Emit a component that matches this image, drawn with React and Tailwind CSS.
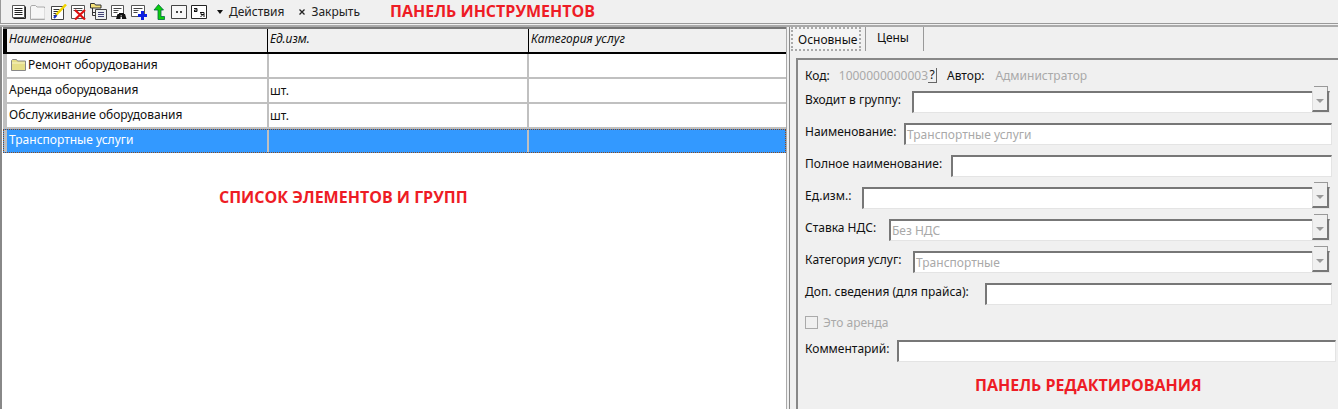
const font = { fontFamily: '"Noto Sans", "Liberation Sans", sans-serif' };

// Иконки панели инструментов
const IconList = () => (
  <svg width="16" height="16" viewBox="0 0 16 16">
    <path d="M1.5 1.5h12v12h-12z" fill="#fff" stroke="#555" />
    <path d="M14.5 2.5v12h-12" fill="none" stroke="#222" />
    <path d="M3.5 4.5h8M3.5 6.5h8M3.5 8.5h8M3.5 10.5h8" stroke="#222" />
  </svg>
);
const IconFolder = () => (
  <svg width="16" height="16" viewBox="0 0 16 16">
    <path d="M.5 15V3l1-1.500h4l1.500 1.500h7.500v12.500H.5z" fill="#f6f6f6" stroke="#aaa" />
    <path d="M1.500 14.500h13V4" fill="none" stroke="#ddd" />
  </svg>
);
const IconEdit = () => (
  <svg width="16" height="16" viewBox="0 0 16 16">
    <path d="M.5 2.500h12v13H.5z" fill="#fff" stroke="#444" />
    <path d="M2.500 5.500h6M2.500 7.500h5M2.500 9.500h4M2.500 11.500h3" stroke="#333" />
    <path d="M15 .5 5 11" stroke="#f2d500" strokeWidth="2.500" />
    <path d="M5.500 11 3 14" stroke="#1a2fc0" strokeWidth="2" />
  </svg>
);
const IconDelete = () => (
  <svg width="16" height="16" viewBox="0 0 16 16">
    <path d="M.5 1.500h13v13H.5z" fill="#fff" stroke="#555" />
    <path d="M2.500 4.500h9M2.500 6.500h9" stroke="#444" />
    <path d="M4 6l10 9.500M14 6 4 15.500" stroke="#e01010" strokeWidth="2.200" />
  </svg>
);
const IconTree = () => (
  <svg width="17" height="17" viewBox="0 0 17 17">
    <path d="M.5 3V.5h4l1 1.500h5.500v3H.5z" fill="#f5e27a" stroke="#333" />
    <path d="M5.500 6.500h11v10h-11z" fill="#eef2f2" stroke="#444" />
    <path d="M2.500 5v7.500h3M2.500 9.500h3" fill="none" stroke="#333" />
    <path d="M8 9.500h6M8 11.500h6M8 13.500h6" stroke="#447" />
  </svg>
);
const IconFind = () => (
  <svg width="16" height="16" viewBox="0 0 16 16">
    <path d="M.5 1.500h12v11H.5z" fill="#fff" stroke="#555" />
    <path d="M2.500 4.500h8M2.500 6.500h5M2.500 8.500h4" stroke="#444" />
    <path d="M6.500 10h3v5H5zM11 10h3l1.500 5H11z" fill="#111" />
    <path d="M8 9h5v2.500H8z" fill="#111" />
  </svg>
);
const IconAdd = () => (
  <svg width="16" height="16" viewBox="0 0 16 16">
    <path d="M.5 1.500h13v11H.5z" fill="#fff" stroke="#555" />
    <path d="M2.500 4.500h9M2.500 6.500h5M2.500 8.500h4" stroke="#444" />
    <path d="M10 7h3v3h3v3h-3v3h-3v-3H7v-3h3z" fill="#0a1fe0" />
  </svg>
);
const IconUp = () => (
  <svg width="12" height="16" viewBox="0 0 12 16">
    <path d="M5.500.5 10.500 6H8v6.500h3.500v3h-6.500V6H1z" fill="#0ccf0c" stroke="#064" strokeWidth=".8" />
  </svg>
);
const IconDots = () => (
  <svg width="16" height="14" viewBox="0 0 16 14">
    <path d="M.5.500h15v13H.5z" fill="#f8f8f8" stroke="#444" />
    <path d="M5 6h2v2H5zM9 6h2v2H9z" fill="#444" />
  </svg>
);
const IconSort = () => (
  <svg width="16" height="14" viewBox="0 0 16 14">
    <path d="M.5.500h15v13H.5z" fill="#fff" stroke="#222" />
    <path d="M3 3.500h3v3H3M6 5H3.500v1.500M9 7.500h4V12M13 7.500h-3v2h3M12 9.500 9.500 12" fill="none" stroke="#111" />
  </svg>
);

const tools = [
  { icon: <IconList />, w: "w-[19px]" },
  { icon: <IconFolder />, w: "w-[21px]" },
  { icon: <IconEdit />, w: "w-[20px]" },
  { icon: <IconDelete />, w: "w-[19px]" },
  { icon: <IconTree />, w: "w-[21px]" },
  { icon: <IconFind />, w: "w-[20px]" },
  { icon: <IconAdd />, w: "w-[22px]" },
  { icon: <IconUp />, w: "w-[18px]" },
  { icon: <IconDots />, w: "w-[20px]" },
  { icon: <IconSort />, w: "w-[20px]" },
];

const columns = [
  { name: "Наименование", w: "w-[261px]", pad: "pl-[2px]" },
  { name: "Ед.изм.", w: "w-[261px]", pad: "pl-[2px]" },
  { name: "Категория услуг", w: "flex-1", pad: "pl-[2px]" },
];

const rows = [
  { name: "Ремонт оборудования", unit: "", folder: true },
  { name: "Аренда оборудования", unit: "шт." },
  { name: "Обслуживание оборудования", unit: "шт." },
];

const Annotation = ({ className, children }) => (
  <span className={`absolute text-[16px] font-bold leading-none text-[#ee1c25] whitespace-nowrap ${className}`} style={{ fontFamily: '"Open Sans", sans-serif' }}>
    {children}
  </span>
);

const Field = ({ value, select }) => (
  <div className="relative flex-1 h-[22px] bg-white border-t-2 border-l-2 border-t-[#777] border-l-[#777] border-r border-b border-r-[#e4e4e4] border-b-[#e4e4e4] pl-[1px] text-[12px] leading-[19px] text-[#a9a9a9] whitespace-nowrap">
    {value}
    {select && (
      <>
        <span className="absolute right-0 -top-[2px] w-[17px] h-[21px] bg-[#f0f0f0] border-l border-[#ddd] border-r-2 border-b-2 border-r-[#777] border-b-[#777] flex items-center justify-center">
          <span className="w-0 h-0 border-x-[4px] border-x-transparent border-t-[4px] border-t-[#999]" />
        </span>
        <span className="absolute right-[1px] -top-[7px] w-[14px] h-[5px] bg-[#f0f0f0] border-t border-r border-[#999]" />
      </>
    )}
  </div>
);

const FormRow = ({ label, labelWidth, value, select, right = "mr-[5px]", mt = "mt-[10px]" }) => (
  <div className={`flex items-center ${mt} ${right}`}>
    <span className={`shrink-0 text-[12px] leading-none text-[#111] pb-[5px] ${labelWidth}`}>{label}</span>
    <Field value={value} select={select} />
  </div>
);

export default function App() {
  return (
    <div className="relative w-[1338px] h-[409px] overflow-hidden bg-[#f0f0f0] text-[12px] text-[#111]" style={font}>
      {/* панель инструментов */}
      <div className="flex items-center h-[23px] pl-[10px] border-l border-[#999] text-[#222]">
        {tools.map((t, i) => (
          <span key={i} className={`flex items-center ${t.w}`}>{t.icon}</span>
        ))}
        <span className="flex items-center ml-[6px] gap-[6px]">
          <span className="w-0 h-0 border-x-[3.5px] border-x-transparent border-t-[4px] border-t-[#111]" />
          Действия
        </span>
        <span className="flex items-center ml-[15px] gap-[6px]">
          <svg width="6" height="6" viewBox="0 0 6 6">
            <path d="M.5.500l5 5M5.500.500l-5 5" stroke="#222" strokeWidth="1.300" />
          </svg>
          Закрыть
        </span>
      </div>
      <div className="h-[4px] border-t border-b-2 border-t-[#999] border-b-[#aaa]" />
      <Annotation className="left-[390px] top-[3px]">ПАНЕЛЬ ИНСТРУМЕНТОВ</Annotation>

      <div className="flex h-[382px]">
        {/* список */}
        <div className="w-[786px] shrink-0 bg-white pl-[1px] border-l-2 border-[#888]">
          <div className="flex h-[27px] bg-[#f0f0f0] border-t-2 border-b-2 border-t-[#777] border-b-black">
            <span className="w-[4px] bg-black shrink-0" />
            {columns.map((c) => (
              <span key={c.name} className={`${c.w} ${c.pad} shrink-0 italic leading-[20px] border-r border-black last:border-r-0`}>{c.name}</span>
            ))}
          </div>
          {rows.map((r) => (
            <div key={r.name} className="flex h-[25px] border-b-[2px] border-[#c0c0c0]">
              <span className="w-[4px] bg-[#c0c0c0] shrink-0" />
              <span className={`flex items-center gap-[2px] w-[262px] pb-[1px] border-r-2 border-[#c0c0c0] shrink-0 ${r.folder ? "pl-[4px]" : "pl-[2px]"}`}>
                {r.folder && (
                  <svg width="15" height="12" viewBox="0 0 15 12">
                    <path d="M.5 11.500V1.500l1-1h4l1 1.500h8v9.500z" fill="#e6de88" stroke="#888" />
                    <path d="M1 4h13" stroke="#f8f4c8" />
                  </svg>
                )}
                {r.name}
              </span>
              <span className="w-[260px] pl-[1px] leading-[24px] border-r-2 border-[#c0c0c0] shrink-0">{r.unit}</span>
              <span className="flex-1" />
            </div>
          ))}
          <div className="flex h-[24px] bg-[#3399ff] text-white border border-dotted border-[#8a4a20]">
            <span className="w-[3px] bg-[#c0c0c0] shrink-0" />
            <span className="w-[262px] pl-[2px] leading-[20px] border-r-2 border-[#c0c0c0] shrink-0">Транспортные услуги</span>
            <span className="w-[260px] border-r-2 border-[#c0c0c0] shrink-0" />
          </div>
        </div>

        {/* разделитель */}
        <div className="w-[4px] shrink-0 border-x border-l-[#aaa] border-r-[#888]" />

        {/* панель редактирования */}
        <div className="flex-1 pl-[1px]">
          <div className="flex h-[24px] text-[12px]">
            <span className="w-[70px] border-2 border-dotted border-[#aaa] bg-[#f4f4f4] pl-[5px] leading-[21px]">Основные</span>
            <span className="w-[59px] pl-[11px] leading-[22px] border-l border-r border-[#999] ml-[4px]">Цены</span>
          </div>
          <div className="mt-[7px] ml-[5px] h-[360px] border-t-2 border-l-2 border-[#888] pl-[7px]">
            <div className="flex items-center h-[17px] mt-[7px] gap-[9px]">
              <span>Код:</span>
              <span className="flex items-center text-[#a9a9a9]">
                1000000000003
                <span className="w-[9px] h-[15px] text-[#111] text-center leading-[14px] bg-[#f0f0f0] border-r border-b border-[#666]">?</span>
              </span>
              <span className="ml-[1px]">Автор:</span>
              <span className="ml-[2px] text-[#a9a9a9]">Администратор</span>
            </div>
            <FormRow label="Входит в группу:" labelWidth="w-[107px]" select mt="mt-[7px]" right="mr-[8px]" />
            <FormRow label="Наименование:" labelWidth="w-[99px]" value="Транспортные услуги" right="mr-[6px]" />
            <FormRow label="Полное наименование:" labelWidth="w-[146px]" right="mr-[6px]" />
            <FormRow label="Ед.изм.:" labelWidth="w-[57px]" select right="mr-[8px]" />
            <FormRow label="Ставка НДС:" labelWidth="w-[84px]" value="Без НДС" select right="mr-[8px]" />
            <FormRow label="Категория услуг:" labelWidth="w-[108px]" value="Транспортные" select right="mr-[8px]" />
            <FormRow label="Доп. сведения (для прайса):" labelWidth="w-[180px]" right="mr-[6px]" />
            <div className="flex items-center h-[13px] mt-[11px] gap-[5px] text-[#a9a9a9]">
              <span className="w-[13px] h-[13px] border border-[#aaa] bg-[#f0f0f0]" />
              Это аренда
            </div>
            <FormRow label="Комментарий:" labelWidth="w-[92px]" mt="mt-[11px]" right="mr-[2px]" />
          </div>
        </div>
      </div>

      <Annotation className="left-[219px] top-[189px]">СПИСОК ЭЛЕМЕНТОВ И ГРУПП</Annotation>
      <Annotation className="left-[975px] top-[377px]">ПАНЕЛЬ РЕДАКТИРОВАНИЯ</Annotation>
    </div>
  );
}
